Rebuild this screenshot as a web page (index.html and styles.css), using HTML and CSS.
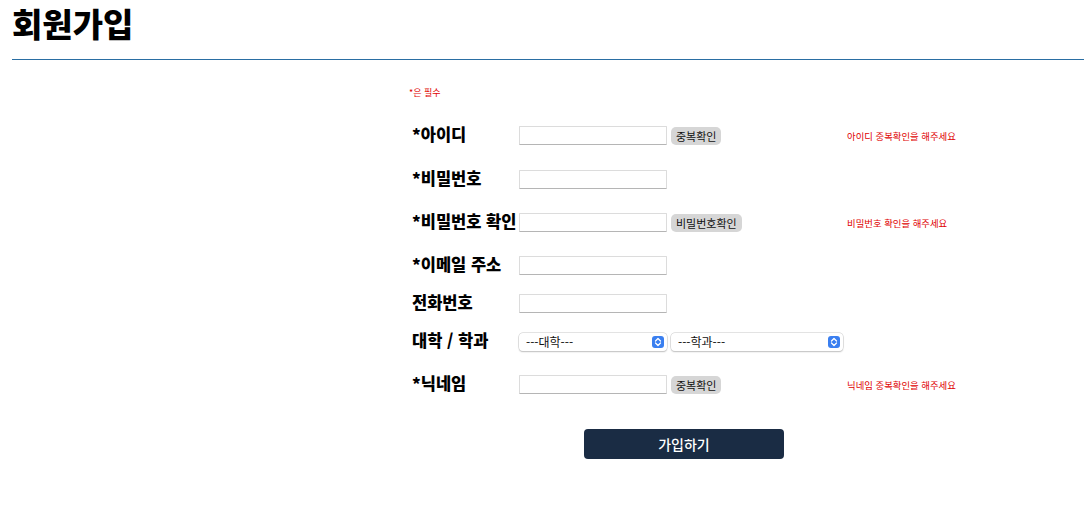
FILE: index.html
```html
<!DOCTYPE html>
<html lang="ko">
<head>
<meta charset="utf-8">
<link rel="stylesheet" href="styles.css">
</head>
<body>
<header class="page-head">
  <h1 class="title">회원가입</h1>
  <hr class="rule">
</header>
<main class="form-wrap">
  <p class="note">*은 필수</p>
  <form class="form">
    <div class="row r1">
      <label class="lbl">*아이디</label>
      <input class="txt" type="text">
      <button type="button" class="chk">중복확인</button>
      <span class="msg">아이디 중복확인을 해주세요</span>
    </div>
    <div class="row r2">
      <label class="lbl">*비밀번호</label>
      <input class="txt" type="password">
    </div>
    <div class="row r3">
      <label class="lbl">*비밀번호 확인</label>
      <input class="txt" type="password">
      <button type="button" class="chk">비밀번호확인</button>
      <span class="msg">비밀번호 확인을 해주세요</span>
    </div>
    <div class="row r4">
      <label class="lbl">*이메일 주소</label>
      <input class="txt" type="text">
    </div>
    <div class="row r5">
      <label class="lbl">전화번호</label>
      <input class="txt" type="text">
    </div>
    <div class="row r6">
      <label class="lbl">대학 / 학과</label>
      <div class="sel sel1"><select><option>---대학---</option></select><span class="arrow"><svg width="8" height="10" viewBox="0 0 8 10"><path d="M1.5 4 L4 1.5 L6.5 4 M1.5 6 L4 8.5 L6.5 6" fill="none" stroke="#fff" stroke-width="1.3" stroke-linecap="round" stroke-linejoin="round"/></svg></span></div>
      <div class="sel sel2"><select><option>---학과---</option></select><span class="arrow"><svg width="8" height="10" viewBox="0 0 8 10"><path d="M1.5 4 L4 1.5 L6.5 4 M1.5 6 L4 8.5 L6.5 6" fill="none" stroke="#fff" stroke-width="1.3" stroke-linecap="round" stroke-linejoin="round"/></svg></span></div>
    </div>
    <div class="row r7">
      <label class="lbl">*닉네임</label>
      <input class="txt" type="text">
      <button type="button" class="chk">중복확인</button>
      <span class="msg">닉네임 중복확인을 해주세요</span>
    </div>
    <div class="submit-row">
      <button type="submit" class="submit">가입하기</button>
    </div>
  </form>
</main>
</body>
</html>
```
FILE: styles.css
```css
* { box-sizing: border-box; }
body {
  margin: 0;
  font-family: "Noto Sans CJK KR", "Noto Sans", sans-serif;
  color: #000;
  background: #fff;
}
.page-head { padding-left: 12px; padding-top: 2px; }
.title {
  margin: 0;
  font-size: 33px;
  font-weight: 900;
  line-height: 42px;
  letter-spacing: 0;
}
.rule {
  margin: 15px 0 0 0;
  border: 0;
  height: 1px;
  background-color: #2a6ea3;
}
.form-wrap { padding-left: 409px; }
.note {
  margin: 27px 0 0 0;
  font-size: 9px;
  line-height: 12px;
  color: #e00000;
}
.form { display: flex; flex-direction: column; }
.row {
  position: relative;
  display: flex;
  align-items: center;
  height: 19px;
}
.r1 { margin-top: 27px; }
.r2 { margin-top: 25px; }
.r3 { margin-top: 24px; }
.r4 { margin-top: 24px; }
.r5 { margin-top: 19px; }
.r6 { margin-top: 19px; }
.r7 { margin-top: 24px; }
.lbl {
  width: 110px;
  padding-left: 3px;
  margin-bottom: 4px;
  font-size: 16.5px;
  line-height: 20px;
  font-weight: 900;
  white-space: nowrap;
}
.txt {
  width: 148px;
  height: 19px;
  margin: 0;
  border: 1px solid #dcdcdc;
  border-bottom-color: #b5b5b5;
  border-radius: 1px;
  background: #fff;
  padding: 0 3px;
  font-size: 11px;
}
.chk {
  margin-left: 4px;
  height: 18px;
  padding: 0 5px;
  border: 0;
  border-radius: 5px;
  background: #d6d6d6;
  color: #111;
  font-family: "Noto Sans CJK KR", sans-serif;
  font-size: 11px;
  line-height: 18px;
}
.row .msg {
  position: absolute;
  left: 438px;
  font-size: 9.4px;
  color: #e00000;
  white-space: nowrap;
}
.sel {
  position: relative;
  height: 18px;
  border-radius: 4px;
  background: #fff;
  box-shadow: 0 0 0 0.5px #c8c8c8, 0 1px 1.5px rgba(0,0,0,0.25);
}
.sel1 { width: 148px; }
.sel2 { width: 172px; margin-left: 4px; }
.sel select {
  display: block;
  appearance: none;
  -webkit-appearance: none;
  width: 100%;
  height: 18px;
  line-height: 18px;
  border: 0;
  background: transparent;
  padding: 0 0 0 7px;
  font-family: "Noto Sans CJK KR", sans-serif;
  font-size: 12px;
  color: #111;
  outline: none;
}
.arrow {
  position: absolute;
  right: 3px;
  top: 3px;
  width: 12px;
  height: 12px;
  border-radius: 3px;
  background: #3a7ff0;
  display: flex;
  align-items: center;
  justify-content: center;
  pointer-events: none;
}
.submit-row { margin-top: 35px; padding-left: 175px; }
.submit {
  width: 200px;
  height: 30px;
  border: 0;
  border-radius: 4px;
  background: #1a2c44;
  color: #fff;
  font-family: "Noto Sans CJK KR", sans-serif;
  font-size: 14px;
  font-weight: 500;
}
```
